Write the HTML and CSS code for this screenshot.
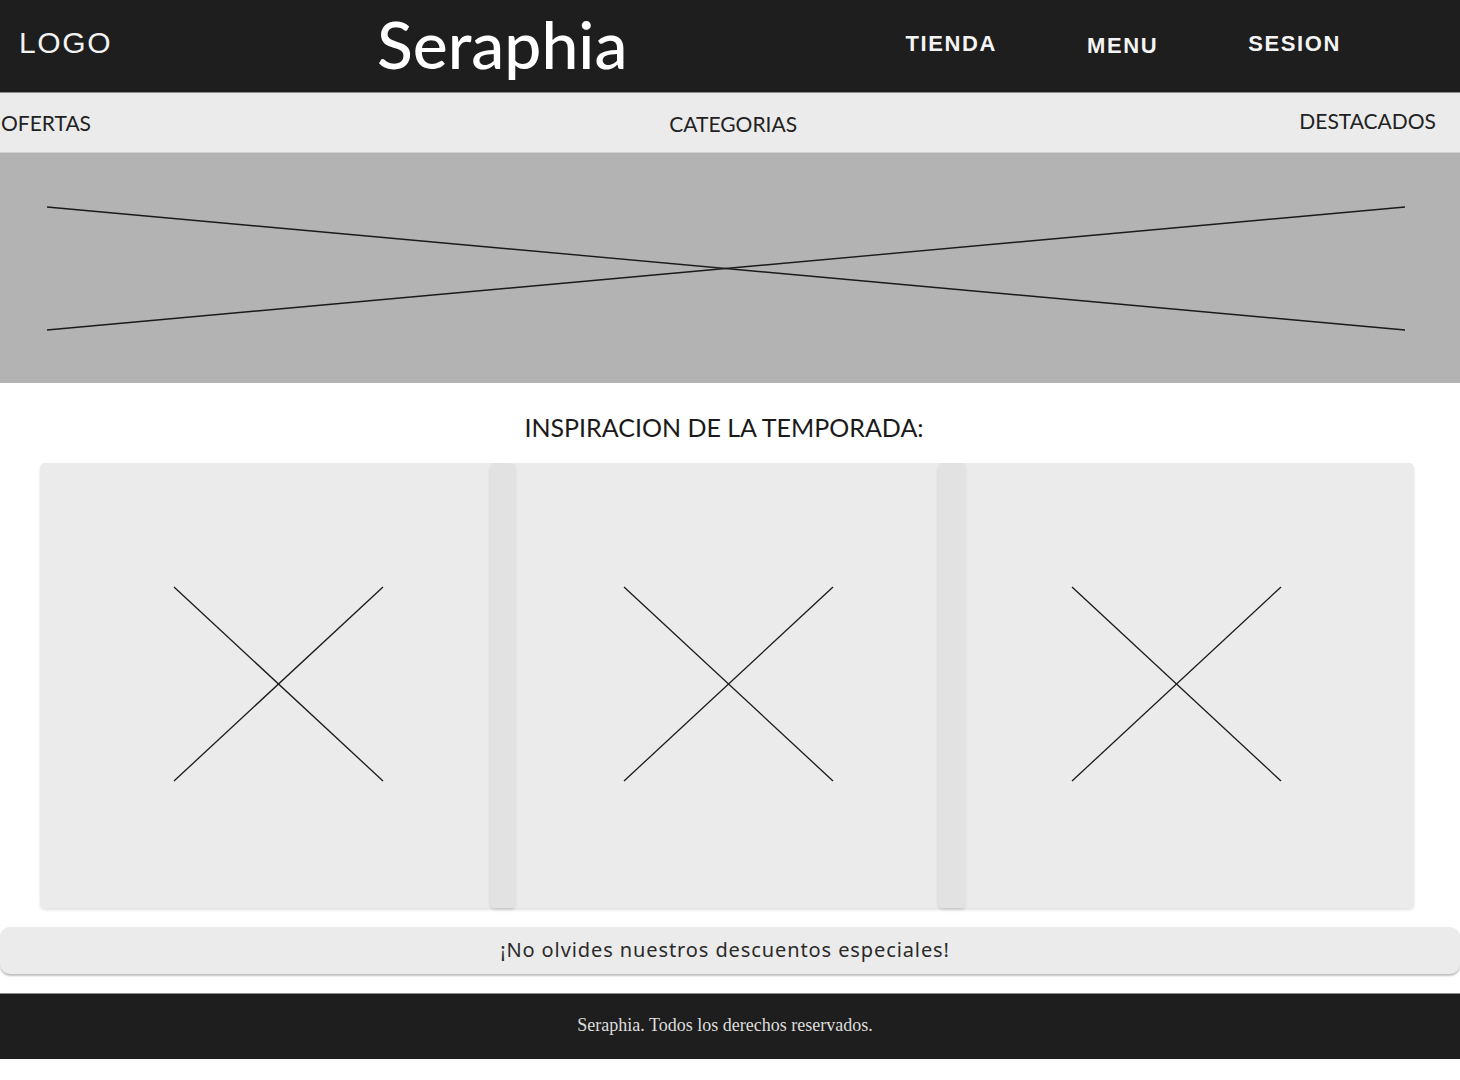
FILE: index.html
```html
<!DOCTYPE html>
<html lang="es">
<head>
<meta charset="utf-8">
<title>Seraphia</title>
<link rel="stylesheet" href="styles.css">
</head>
<body>
<header class="topbar">
  <div class="logo">LOGO</div>
  <div class="brand">Seraphia</div>
  <nav class="mainnav">
    <a class="navlink">TIENDA</a>
    <a class="navlink navlink-low">MENU</a>
    <a class="navlink">SESION</a>
  </nav>
</header>
<nav class="subnav">
  <a class="sublink">OFERTAS</a>
  <a class="sublink sublink-center">CATEGORIAS</a>
  <a class="sublink sublink-right">DESTACADOS</a>
</nav>
<section class="hero">
  <svg class="hero-x" viewBox="0 0 1460 230" preserveAspectRatio="none">
    <line x1="47" y1="54" x2="1405" y2="177" />
    <line x1="47" y1="177" x2="1405" y2="54" />
  </svg>
</section>
<main class="content">
  <h2 class="section-title">INSPIRACION DE LA TEMPORADA:</h2>
  <div class="cards">
    <div class="card card-1">
      <svg class="card-x" viewBox="0 0 209 194"><line x1="0" y1="0" x2="209" y2="194"/><line x1="0" y1="194" x2="209" y2="0"/></svg>
    </div>
    <div class="card card-2">
      <svg class="card-x" viewBox="0 0 209 194"><line x1="0" y1="0" x2="209" y2="194"/><line x1="0" y1="194" x2="209" y2="0"/></svg>
    </div>
    <div class="card card-3">
      <svg class="card-x" viewBox="0 0 209 194"><line x1="0" y1="0" x2="209" y2="194"/><line x1="0" y1="194" x2="209" y2="0"/></svg>
    </div>
  </div>
  <div class="promo">¡No olvides nuestros descuentos especiales!</div>
</main>
<footer class="footer">Seraphia. Todos los derechos reservados.</footer>
</body>
</html>
```

FILE: styles.css
```css
* { box-sizing: border-box; }
html, body { margin: 0; padding: 0; background: #ffffff; }
body { width: 1460px; }

.topbar {
  height: 93px;
  background: #1e1e1e;
  border-bottom: 1px solid #8a8a8a;
  display: flex;
  align-items: center;
}
.logo {
  width: 377px;
  padding-left: 19px;
  font-family: "Liberation Sans", Arial, sans-serif;
  font-size: 30px;
  font-weight: 400;
  color: #f2f2f2;
  letter-spacing: 1.6px;
  margin-top: -7px;
}
.brand {
  font-family: Lato, "Open Sans", sans-serif;
  font-size: 66px;
  font-weight: 500;
  color: #ffffff;
  margin-top: -6px;
}
.mainnav {
  margin-left: auto;
  margin-right: 119px;
  display: flex;
  gap: 90px;
  align-items: center;
  margin-top: -4px;
}
.navlink {
  font-family: "Liberation Sans", Arial, sans-serif;
  font-weight: 700;
  font-size: 22px;
  letter-spacing: 1.6px;
  color: #f4f4f4;
}
.navlink-low { margin-top: 4px; }

.subnav {
  height: 60px;
  background: #ebebeb;
  border-bottom: 1px solid #d0d0d0;
  display: flex;
  align-items: center;
  justify-content: space-between;
  padding: 0 24px 0 1px;
  font-family: Lato, "Open Sans", sans-serif;
  font-size: 21px;
  color: #222222;
}
.sublink { display: block; }
.sublink-center { margin-left: 76px; margin-top: 2px; }
.sublink-right { margin-top: -5px; }

.hero {
  height: 230px;
  background: #b3b3b3;
}
.hero-x { display: block; width: 1460px; height: 230px; }
.hero-x line { stroke: #1a1a1a; stroke-width: 1.4; }

.content { padding-top: 29px; }
.section-title {
  margin: 0;
  text-align: center;
  font-family: Lato, "Open Sans", sans-serif;
  font-weight: 400;
  font-size: 25px;
  color: #1a1a1a;
  padding-right: 12px;
  height: 30px;
  line-height: 30px;
}
.cards {
  margin: 21px 46px 0 40px;
  display: grid;
  grid-template-columns: 450px 26px 422px 28px 448px;
  height: 445px;
}
.card {
  grid-row: 1;
  background: rgba(219, 219, 219, 0.55);
  border-radius: 5px;
  box-shadow: 0 2px 3px rgba(0, 0, 0, 0.12);
  display: flex;
  align-items: center;
  justify-content: center;
}
.card-1 { grid-column: 1 / 3; }
.card-2 { grid-column: 2 / 5; }
.card-3 { grid-column: 4 / 6; }
.card-x { width: 209px; height: 194px; display: block; overflow: visible; margin-top: -3px; }
.card-x line { stroke: #1a1a1a; stroke-width: 1.3; }

.promo {
  margin-top: 19px;
  height: 47px;
  background: #ebebeb;
  border-radius: 10px;
  box-shadow: 0 2px 2px rgba(0, 0, 0, 0.25);
  display: flex;
  align-items: center;
  justify-content: center;
  font-family: "Noto Sans", "Open Sans", sans-serif;
  font-size: 20px;
  letter-spacing: 0.9px;
  color: #2a2a2a;
  padding-right: 10px;
  padding-bottom: 2px;
}

.footer {
  margin-top: 19px;
  height: 66px;
  background: #1e1e1e;
  border-top: 1px solid #8a8a8a;
  display: flex;
  align-items: center;
  justify-content: center;
  font-family: "Liberation Serif", "Times New Roman", serif;
  font-size: 18px;
  color: #dddddd;
  padding-right: 10px;
  padding-bottom: 2px;
}
```
